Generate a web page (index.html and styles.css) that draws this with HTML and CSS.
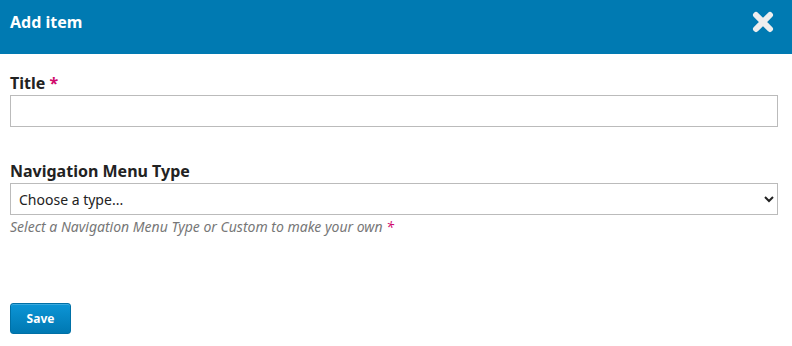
FILE: index.html
```html
<!DOCTYPE html>
<html lang="en">
<head>
    <meta charset="UTF-8">
    <title>Add item</title>
    <link rel="stylesheet" href="styles.css">
</head>
<body>
    <div class="modal">
        <div class="modal-header">
            <h2>Add item</h2>
            <button class="close" aria-label="Close">
                <svg width="22" height="22" viewBox="0 0 22 22">
                    <path d="M4 4 L18 18 M18 4 L4 18" stroke="#eeeeee" stroke-width="6" stroke-linecap="round"/>
                </svg>
            </button>
        </div>

        <form class="modal-body">
            <div class="field">
                <label class="label">Title <span class="req">*</span></label>
                <input class="text-input" type="text">
            </div>

            <div class="field">
                <label class="label">Navigation Menu Type</label>
                <select class="select-input">
                    <option>Choose a type...</option>
                </select>
                <p class="help">Select a Navigation Menu Type or Custom to make your own <span class="req">*</span></p>
            </div>

            <div class="actions">
                <button type="button" class="btn-primary">Save</button>
            </div>
        </form>
    </div>
</body>
</html>
```

FILE: styles.css
```css
* {
    margin: 0;
    padding: 0;
    box-sizing: border-box;
}

body {
    font-family: 'Noto Sans', 'Open Sans', sans-serif;
    background: #fff;
    color: #222;
}

.modal-header {
    height: 54px;
    background: #007ab2;
    display: flex;
    align-items: center;
    justify-content: space-between;
    padding: 0 18px 0 10px;
}

.modal-header h2 {
    color: #fff;
    font-size: 16px;
    font-weight: 700;
    margin-top: -10px;
}

.close {
    background: none;
    border: none;
    width: 22px;
    height: 22px;
    display: flex;
    margin-top: -10px;
}

.modal-body {
    padding: 17px 14px 0 10px;
}

.field {
    margin-bottom: 32px;
}

.label {
    display: block;
    font-size: 16px;
    font-weight: 700;
    color: #222;
    line-height: 24px;
}

.req {
    color: #d00a6c;
}

.text-input,
.select-input {
    display: block;
    width: 100%;
    height: 32px;
    border: 1px solid #bbb;
    border-radius: 0;
    background: #fff;
    font-family: inherit;
    font-size: 14px;
    color: #222;
    padding: 0 8px;
}

.select-input {
    padding: 0 4px;
}

.help {
    font-size: 14px;
    font-style: italic;
    color: #777;
    line-height: 24px;
}

.field:nth-child(2) {
    margin-bottom: 64px;
}

.btn-primary {
    width: 61px;
    height: 31px;
    border: 1px solid #0070a6;
    border-radius: 3px;
    background: linear-gradient(#0c95d6, #0078b2);
    color: #fff;
    font-family: inherit;
    font-size: 12px;
    font-weight: 700;
    box-shadow: inset 0 1px 0 rgba(255, 255, 255, 0.2);
}
```
